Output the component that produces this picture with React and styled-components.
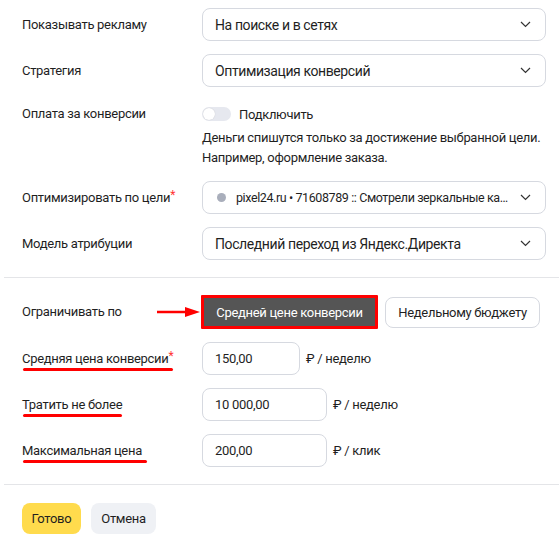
import React from 'react';
import styled, {createGlobalStyle} from 'styled-components';

const Global = createGlobalStyle`
  body {
    margin: 0;
    background: #fff;
    font-family: Roboto, "Liberation Sans", sans-serif;
    color: #1f1f1f;
    letter-spacing: -0.3px;
  }
`;

const Page = styled.div`
  width: 559px;
  padding-top: 8px;
`;

const Section = styled.div`
  display: flex;
  flex-direction: column;
  gap: ${props => props.gap || 13}px;
  padding: 0 13px 0 22px;
`;

const Divider = styled.div`
  height: 1px;
  background: #e4e5e8;
  margin: ${props => props.before || 17}px 0 ${props => props.after || 17}px 4px;
`;

const Row = styled.div`
  display: grid;
  grid-template-columns: 180px minmax(0, 1fr);
  align-items: ${props => props.top ? 'start' : 'center'};
`;

const Label = styled.div`
  font-size: 13px;
  line-height: 20px;
  padding-top: ${props => props.top ? 4 : 0}px;
`;

const Marked = styled.span`
  position: relative;
  &::after {
    content: '';
    position: absolute;
    left: ${props => props.left || 0}px;
    right: ${props => props.right || 0}px;
    bottom: ${props => props.bottom || -4}px;
    height: 3px;
    border-radius: 2px;
    background: #f00;
  }
`;

const Star = styled.span`
  color: #f33;
  font-size: 12px;
  vertical-align: top;
  position: relative;
  top: -3px;
`;

const Select = styled.div`
  height: 33px;
  box-sizing: border-box;
  border: 1px solid #d6d9e0;
  border-radius: 8px;
  display: flex;
  align-items: center;
  padding: 0 14px 0 12px;
  font-size: ${props => props.small ? 12.5 : 14}px;
  letter-spacing: ${props => props.small ? -0.4 : -0.4}px;
  gap: 10px;
`;

const SelectText = styled.div`
  flex: 1;
  white-space: nowrap;
  overflow: hidden;
  text-overflow: ellipsis;
`;

const Dot = styled.span`
  width: 9px;
  height: 9px;
  border-radius: 50%;
  background: #a9aebb;
  margin-left: 2px;
  flex: none;
`;

const Chevron = () => (
  <svg width="11" height="7" viewBox="0 0 11 7" fill="none">
    <path d="M1 1l4.5 4.5L10 1" stroke="#333" strokeWidth="1.2" />
  </svg>
);

const ToggleLine = styled.div`
  display: flex;
  align-items: center;
  gap: 8px;
  height: 28px;
  font-size: 13px;
`;

const Track = styled.span`
  width: 29px;
  height: 14px;
  border-radius: 7px;
  background: #e6e8ef;
  position: relative;
  &::before {
    content: '';
    position: absolute;
    left: 1px;
    top: 1px;
    width: 12px;
    height: 12px;
    border-radius: 50%;
    background: #fff;
    box-shadow: 0 0 1px rgba(0,0,0,.2);
  }
`;

const Hint = styled.div`
  font-size: 13px;
  line-height: 20px;
  white-space: nowrap;
`;

const Buttons = styled.div`
  display: flex;
  align-items: center;
  gap: 7px;
  position: relative;
`;

const Button = styled.button`
  font-family: inherit;
  letter-spacing: inherit;
  font-size: 13px;
  height: ${props => props.h || 31}px;
  width: ${props => props.w}px;
  padding: 0;
  border-radius: 8px;
  white-space: nowrap;
  cursor: pointer;
  color: #1f1f1f;
  background: ${props => props.bg || '#fff'};
  border: ${props => props.outlined ? '1px solid #d6d9e0' : 'none'};
`;

const Active = styled.button`
  font-family: inherit;
  letter-spacing: inherit;
  font-size: 13px;
  height: 34px;
  width: 177px;
  margin-left: -1px;
  border: 3px solid #f00;
  background: #555;
  color: #fff;
  border-radius: 1px;
  padding: 0;
  white-space: nowrap;
`;

const Arrow = styled.svg`
  position: absolute;
  left: -45px;
  top: 11px;
`;

const Amount = styled.div`
  display: flex;
  align-items: center;
  gap: 6px;
  font-size: 13px;
`;

const Input = styled.div`
  width: ${props => props.w}px;
  height: 33px;
  box-sizing: border-box;
  border: 1px solid #d6d9e0;
  border-radius: 8px;
  display: flex;
  align-items: center;
  padding: 0 12px;
  font-size: 13px;
`;

const Footer = styled.div`
  display: flex;
  gap: 10px;
  padding-left: 22px;
`;

const amounts = [
  {label: 'Средняя цена конверсии', star: true, value: '150,00', w: 98, unit: '₽ / неделю', mark: 0},
  {label: 'Тратить не более', value: '10 000,00', w: 125, unit: '₽ / неделю', mark: 0},
  {label: 'Максимальная цена', value: '200,00', w: 125, unit: '₽ / клик', mark: 5},
];

export default function App() {
  return (
    <Page>
      <Global />
      <Section>
        <Row>
          <Label>Показывать рекламу</Label>
          <Select><SelectText>На поиске и в сетях</SelectText><Chevron /></Select>
        </Row>
        <Row>
          <Label>Стратегия</Label>
          <Select>
            <SelectText><Marked left={1} right={-8} bottom={-6}>Оптимизация конверсий</Marked></SelectText>
            <Chevron />
          </Select>
        </Row>
        <Row top>
          <Label top>Оплата за конверсии</Label>
          <div>
            <ToggleLine><Track />Подключить</ToggleLine>
            <Hint>Деньги спишутся только за достижение выбранной цели.<br />Например, оформление заказа.</Hint>
          </div>
        </Row>
        <Row>
          <Label>Оптимизировать по цели<Star>*</Star></Label>
          <Select small>
            <Dot />
            <SelectText>pixel24.ru • 71608789 :: Смотрели зеркальные камеры</SelectText>
            <Chevron />
          </Select>
        </Row>
        <Row>
          <Label>Модель атрибуции</Label>
          <Select><SelectText>Последний переход из Яндекс.Директа</SelectText><Chevron /></Select>
        </Row>
      </Section>
      <Divider />
      <Section gap={13}>
        <Row>
          <Label>Ограничивать по</Label>
          <Buttons>
            <Arrow width="44" height="12" viewBox="0 0 44 12">
              <path d="M0 6h30" stroke="#f00" strokeWidth="2.5" />
              <path d="M28 1l15 5-15 5z" fill="#f00" />
            </Arrow>
            <Active>Средней цене конверсии</Active>
            <Button outlined w={155}>Недельному бюджету</Button>
          </Buttons>
        </Row>
        {amounts.map((a, i) => (
          <Row key={`amount-${i}`}>
            <Label>
              <Marked left={1} right={-a.mark} bottom={-5}>{a.label}{a.star && <Star>*</Star>}</Marked>
            </Label>
            <Amount>
              <Input w={a.w}>{a.value}</Input>
              {a.unit}
            </Amount>
          </Row>
        ))}
      </Section>
      <Divider after={18} />
      <Footer>
        <Button bg="#ffdb4d" w={59}>Готово</Button>
        <Button bg="#eff1f5" w={65}>Отмена</Button>
      </Footer>
    </Page>
  );
}
